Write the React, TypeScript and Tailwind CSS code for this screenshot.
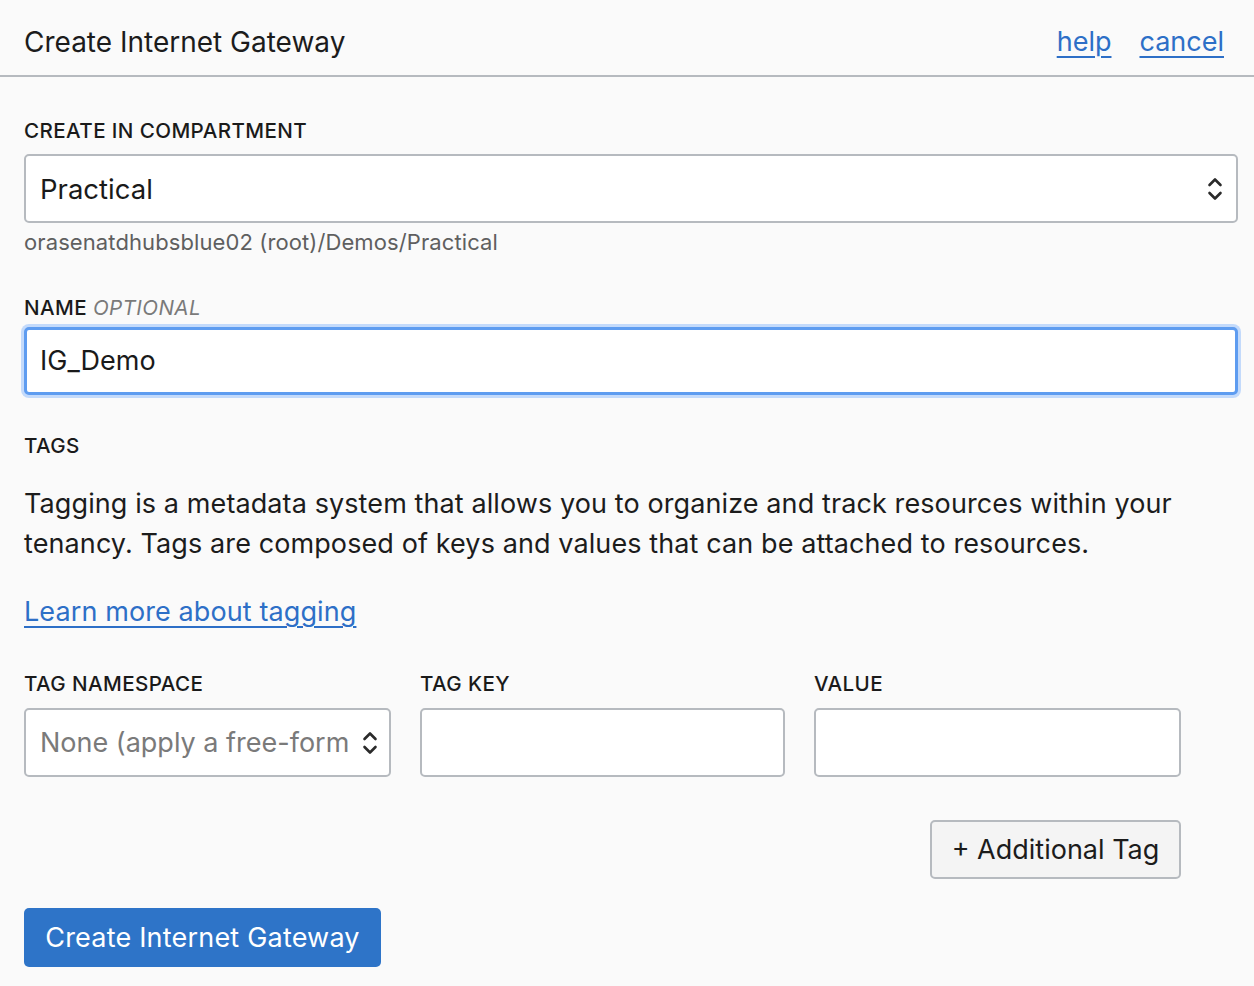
import React from "react";

function Chevrons({ className = "" }: { className?: string }) {
  return (
    <svg width="18" height="28" viewBox="0 0 18 28" className={className} fill="none" stroke="#2a2a2a" strokeWidth="2.6" strokeLinecap="round" strokeLinejoin="round">
      <polyline points="3.5,10 9,4.5 14.5,10" />
      <polyline points="3.5,18 9,23.5 14.5,18" />
    </svg>
  );
}

const label = "text-[20.6px] leading-[24px] font-medium tracking-[0.4px] text-[#1a1a1a]";

export default function App() {
  const font = { fontFamily: "Inter, 'Noto Sans', sans-serif" };
  return (
    <div className="w-[1254px] h-[986px] bg-[#fafafa] text-[#1a1a1a] overflow-hidden" style={font}>
      <div className="h-[77px] border-b-2 border-[#b6babf] flex items-center justify-between pl-[24px] pr-[30px] pt-[8px]">
        <div className="text-[28px] leading-[32px] tracking-[0px] text-[#1c1c1c]">Create Internet Gateway</div>
        <div className="flex gap-[28px] text-[27px] leading-[32px] text-[#2d6fc7]">
          <a className="underline underline-offset-[5px] decoration-[2px]" href="#">help</a>
          <a className="underline underline-offset-[5px] decoration-[2px]" href="#">cancel</a>
        </div>
      </div>

      <div className="px-[24px] pr-[16px]">
        <div className={`mt-[42px] ${label}`}>CREATE IN COMPARTMENT</div>
        <div className="mt-[11px] h-[69px] bg-white border-2 border-[#b6babf] rounded-[5px] flex items-center justify-between pl-[14px] pr-[12px]">
          <span className="text-[27.5px] leading-[32px]">Practical</span>
          <Chevrons />
        </div>
        <div className="mt-[7px] text-[22px] leading-[24px] tracking-[0.1px] text-[#5f5f5f]">orasenatdhubsblue02 (root)/Demos/Practical</div>

        <div className={`mt-[42px] ${label}`}>
          NAME <span className="italic font-normal text-[#7a7a7a]">OPTIONAL</span>
        </div>
        <div className="mt-[7px] h-[68px] bg-white border-[3px] border-[#5e9cf0] rounded-[5px] shadow-[0_0_0_3px_#c3dafb] flex items-center pl-[13px]">
          <span className="text-[27px] leading-[32px]">IG_Demo</span>
        </div>

        <div className={`mt-[39px] ${label}`}>TAGS</div>
        <p className="mt-[26px] text-[27px] leading-[40px] tracking-[0.1px] text-[#1c1c1c] pr-[40px]">
          Tagging is a metadata system that allows you to organize and track resources within your tenancy. Tags are composed of keys and values that can be attached to resources.
        </p>
        <div className="mt-[28px] text-[27px] leading-[40px] tracking-[0.1px]">
          <a href="#" className="text-[#2d6fc7] underline underline-offset-[5px] decoration-[2px]">Learn more about tagging</a>
        </div>

        <div className="mt-[40px] grid grid-cols-[367px_365px_367px] gap-[29px] w-[1157px]">
          <div>
            <div className={label}>TAG NAMESPACE</div>
            <div className="mt-[12px] h-[69px] bg-white border-2 border-[#b6babf] rounded-[5px] flex items-center justify-between pl-[14px] pr-[10px] overflow-hidden">
              <span className="text-[27px] leading-[32px] text-[#7a7a7a] whitespace-nowrap overflow-hidden">None (apply a free-form</span>
              <Chevrons className="shrink-0 ml-[6px]" />
            </div>
          </div>
          <div>
            <div className={label}>TAG KEY</div>
            <div className="mt-[12px] h-[69px] bg-white border-2 border-[#b6babf] rounded-[5px]" />
          </div>
          <div>
            <div className={label}>VALUE</div>
            <div className="mt-[12px] h-[69px] bg-white border-2 border-[#b6babf] rounded-[5px]" />
          </div>
        </div>

        <div className="w-[1157px] flex justify-end mt-[43px]">
          <button className="h-[59px] w-[251px] bg-[#f4f4f4] border-2 border-[#b6babf] rounded-[5px] text-[27px] leading-[32px] text-[#1c1c1c]">
            + Additional Tag
          </button>
        </div>

        <div className="mt-[29px]">
          <button className="h-[59px] w-[357px] bg-[#2e74c8] rounded-[5px] text-[27px] leading-[32px] tracking-[0.2px] text-white">
            Create Internet Gateway
          </button>
        </div>
      </div>
    </div>
  );
}
